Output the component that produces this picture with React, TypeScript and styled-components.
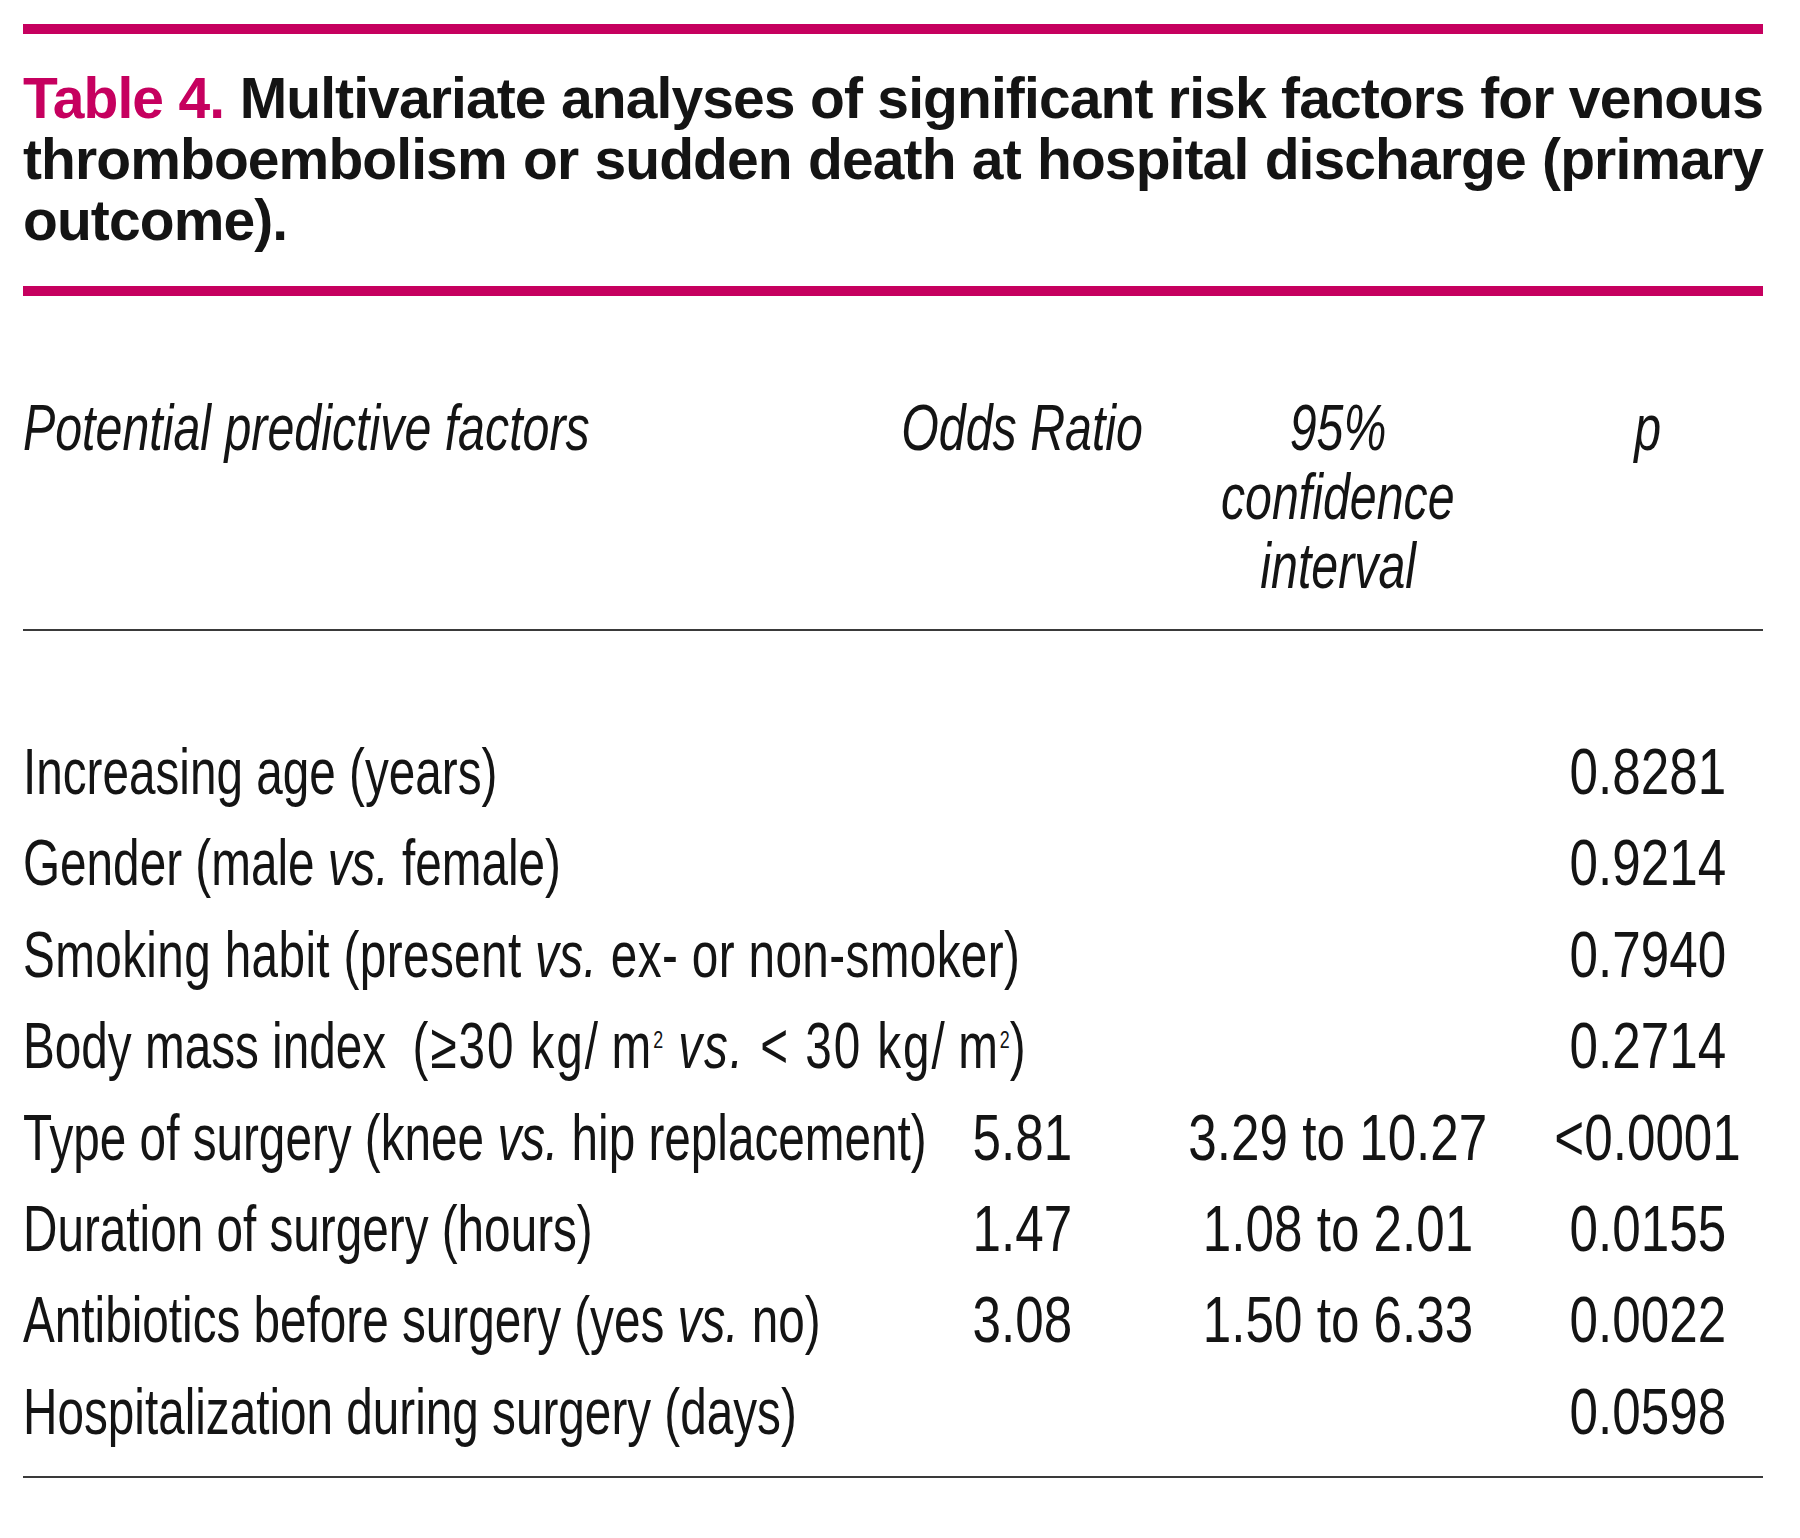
import React from "react";
import styled, { createGlobalStyle } from "styled-components";

const PINK = "#c6005f";
const SANS = `"Liberation Sans", Arial, sans-serif`;

const GlobalStyle = createGlobalStyle`
  html, body { margin: 0; padding: 0; background: #ffffff; }
  body { font-family: ${SANS}; color: #111; }
`;

const Page = styled.div`
  width: 1740px;
  padding: 24px 37px 40px 23px;
`;

const PinkRule = styled.div`
  height: 10px;
  background: ${PINK};
`;

const Caption = styled.div`
  margin: 34px 0 35px;
  font-family: ${SANS};
  font-weight: 700;
  font-size: 57px;
  letter-spacing: -0.9px;
  line-height: 61px;
  color: #141414;
`;

const CaptionLine = styled.div<{ $fill?: boolean }>`
  white-space: nowrap;
  text-align: ${(p) => (p.$fill ? "justify" : "left")};
  text-align-last: ${(p) => (p.$fill ? "justify" : "left")};
`;

const Label = styled.span`
  color: ${PINK};
`;

const COLS = "894px 210px 422px 198px";

const HeadGrid = styled.div`
  display: grid;
  grid-template-columns: ${COLS};
  margin-top: 98px;
  font-family: ${SANS};
  font-style: italic;
  font-size: 64px;
  line-height: 69px;
  color: #141414;
`;

const HeadCell = styled.div<{ $align?: "start" | "center" }>`
  display: flex;
  flex-direction: column;
  align-items: ${(p) => (p.$align === "start" ? "flex-start" : "center")};
  white-space: nowrap;
`;

/* condensed rendering of the narrow typeface used by the journal */
const Squeeze = styled.span<{ $sx: number; $origin: "left" | "center" }>`
  display: inline-block;
  white-space: nowrap;
  transform: scaleX(${(p) => p.$sx});
  transform-origin: ${(p) => p.$origin} center;
`;

const ThinRule = styled.div<{ $gap: number }>`
  height: 2px;
  background: #3a3a3a;
  margin-top: ${(p) => p.$gap}px;
`;

const Body = styled.div`
  margin-top: 96px;
`;

const Row = styled.div`
  display: grid;
  grid-template-columns: ${COLS};
  height: 91.4px;
  align-items: center;
  font-family: ${SANS};
  font-size: 64px;
  line-height: 91.4px;
  color: #141414;
`;

const Cell = styled.div<{ $align?: "start" | "center" }>`
  display: flex;
  justify-content: ${(p) => (p.$align === "start" ? "flex-start" : "center")};
  white-space: nowrap;
`;

const Em = styled.i`
  font-style: italic;
`;

const Loose = styled.span<{ $ls: number }>`
  letter-spacing: ${(p) => p.$ls}px;
`;

const Sup = styled.span`
  font-size: 24px;
  line-height: 0;
  vertical-align: 20px;
  letter-spacing: 0;
`;

type RowData = {
  label: React.ReactNode;
  or?: string;
  ci?: string;
  p: string;
};

const vs = <Em>vs.</Em>;

const rows: RowData[] = [
  { label: "Increasing age (years)", p: "0.8281" },
  { label: <>Gender (male {vs} female)</>, p: "0.9214" },
  {
    label: (
      <Loose $ls={0.5}>
        Smoking habit (present {vs} ex- or non-smoker)
      </Loose>
    ),
    p: "0.7940",
  },
  {
    label: (
      <>
        Body mass index&nbsp;{" "}
        <Loose $ls={2.6}>
          (≥30 kg/{"\u2009"}m<Sup>2</Sup> {vs} &lt; 30 kg/{"\u2009"}m<Sup>2</Sup>)
        </Loose>
      </>
    ),
    p: "0.2714",
  },
  {
    label: <>Type of surgery (knee {vs} hip replacement)</>,
    or: "5.81",
    ci: "3.29 to 10.27",
    p: "<0.0001",
  },
  { label: "Duration of surgery (hours)", or: "1.47", ci: "1.08 to 2.01", p: "0.0155" },
  {
    label: <>Antibiotics before surgery (yes {vs} no)</>,
    or: "3.08",
    ci: "1.50 to 6.33",
    p: "0.0022",
  },
  { label: "Hospitalization during surgery (days)", p: "0.0598" },
];

const LABEL_SX = 0.745;
const HEAD_SX = 0.755;
const NUM_SX = 0.8;

export default function App() {
  return (
    <>
      <GlobalStyle />
      <Page>
        <PinkRule />
        <Caption>
          <CaptionLine $fill>
            <Label>Table 4.</Label> Multivariate analyses of significant risk factors for venous
          </CaptionLine>
          <CaptionLine $fill>
            thromboembolism or sudden death at hospital discharge (primary
          </CaptionLine>
          <CaptionLine>outcome).</CaptionLine>
        </Caption>
        <PinkRule />

        <HeadGrid>
          <HeadCell $align="start">
            <Squeeze $sx={HEAD_SX} $origin="left">Potential predictive factors</Squeeze>
          </HeadCell>
          <HeadCell>
            <Squeeze $sx={HEAD_SX} $origin="center">Odds Ratio</Squeeze>
          </HeadCell>
          <HeadCell>
            <Squeeze $sx={HEAD_SX} $origin="center">95%</Squeeze>
            <Squeeze $sx={HEAD_SX} $origin="center">confidence</Squeeze>
            <Squeeze $sx={HEAD_SX} $origin="center">interval</Squeeze>
          </HeadCell>
          <HeadCell>
            <Squeeze $sx={HEAD_SX} $origin="center">p</Squeeze>
          </HeadCell>
        </HeadGrid>
        <ThinRule $gap={28} />

        <Body>
          {rows.map((r, i) => (
            <Row key={i}>
              <Cell $align="start">
                <Squeeze $sx={LABEL_SX} $origin="left">{r.label}</Squeeze>
              </Cell>
              <Cell>
                <Squeeze $sx={NUM_SX} $origin="center">{r.or ?? ""}</Squeeze>
              </Cell>
              <Cell>
                <Squeeze $sx={NUM_SX} $origin="center">{r.ci ?? ""}</Squeeze>
              </Cell>
              <Cell>
                <Squeeze $sx={NUM_SX} $origin="center">{r.p}</Squeeze>
              </Cell>
            </Row>
          ))}
        </Body>
        <ThinRule $gap={18} />
      </Page>
    </>
  );
}
